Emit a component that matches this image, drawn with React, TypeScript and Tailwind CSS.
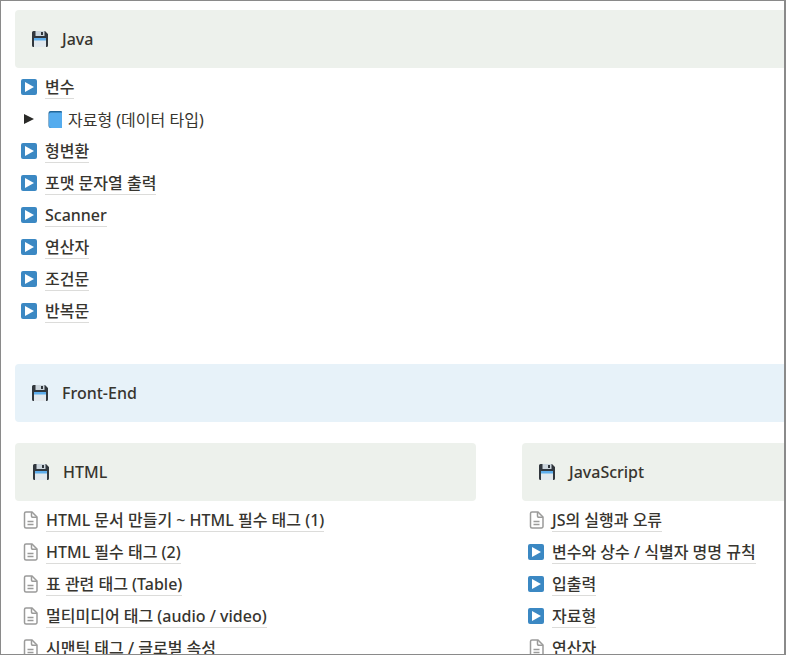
function SaveIcon() {
  return (
    <svg width="16" height="16" viewBox="0 0 16 16" className="shrink-0">
      <path d="M1.5 0H13L16 3V14.5A1.5 1.5 0 0 1 14.5 16H1.5A1.5 1.5 0 0 1 0 14.5V1.5A1.5 1.5 0 0 1 1.5 0z" fill="#31373d" />
      <rect x="3.5" y="0" width="9" height="5" fill="#ccd6dd" />
      <rect x="9" y="1" width="2" height="3" fill="#31373d" />
      <rect x="2" y="7" width="12" height="9" fill="#e1e8ed" />
      <rect x="2" y="7" width="12" height="2.5" fill="#5dadec" />
    </svg>
  );
}

function VideoIcon() {
  return (
    <svg width="16" height="16" viewBox="0 0 16 16" className="shrink-0">
      <rect width="16" height="16" rx="2" fill="#3b88c3" />
      <path d="M4 3v10l9-5z" fill="#fff" />
    </svg>
  );
}

function PageIcon() {
  return (
    <svg width="15" height="18" viewBox="0 0 15 18" fill="none" stroke="#9b9b9a" strokeWidth="1.5" className="shrink-0">
      <path d="M3 1h6L14 6v9.5a1.5 1.5 0 0 1-1.5 1.5H3a1.5 1.5 0 0 1-1.5-1.5v-13A1.5 1.5 0 0 1 3 1z" />
      <path d="M8.5 1v4a1.2 1.2 0 0 0 1.2 1.2H14" />
      <path d="M4.5 10.5h6M4.5 13.5h6" />
    </svg>
  );
}

function BookIcon() {
  return (
    <svg width="15" height="17" viewBox="0 0 15 17" className="shrink-0">
      <path d="M2.5 0H13a1 1 0 0 1 1 1v15a1 1 0 0 1-1 1H3a2.5 2.5 0 0 1-2.5-2.5V2A2 2 0 0 1 2.5 0z" fill="#226699" />
      <path d="M3.5 1.5H14V17H3.5A2.5 2.5 0 0 1 1 14.5V3.5a2 2 0 0 1 2.5-2z" fill="#55acee" />
    </svg>
  );
}

function Callout({ title, tone, className }: { title: string; tone: string; className?: string }) {
  return (
    <div className={`flex h-[58px] items-center gap-[14px] rounded-l-[4px] text-base font-medium text-[#37352f] ${tone} ${className ?? ''}`}>
      <SaveIcon />
      <span>{title}</span>
    </div>
  );
}

function LinkRow({ label, icon }: { label: string; icon: 'video' | 'page' }) {
  return (
    <div className="flex h-8 items-center gap-2 pl-[6px] text-base font-medium leading-5 text-[#37352f]">
      <span className="flex w-4 justify-center">{icon === 'video' ? <VideoIcon /> : <PageIcon />}</span>
      <span className="mt-[1px] border-b border-[#dcdcda] pb-[1px]">{label}</span>
    </div>
  );
}

const javaTop = ['변수'];
const javaRest = ['형변환', '포맷 문자열 출력', 'Scanner', '연산자', '조건문', '반복문'];

const htmlRows = [
  'HTML 문서 만들기 ~ HTML 필수 태그 (1)',
  'HTML 필수 태그 (2)',
  '표 관련 태그 (Table)',
  '멀티미디어 태그 (audio / video)',
  '시맨틱 태그 / 글로벌 속성',
];

const jsRows: { label: string; icon: 'video' | 'page' }[] = [
  { label: 'JS의 실행과 오류', icon: 'page' },
  { label: '변수와 상수 / 식별자 명명 규칙', icon: 'video' },
  { label: '입출력', icon: 'video' },
  { label: '자료형', icon: 'video' },
  { label: '연산자', icon: 'page' },
];

export default function App() {
  return (
    <div
      className="h-[655px] w-[786px] overflow-hidden border border-r-2 border-[#8a8a8a] bg-white"
      style={{ fontFamily: '"Noto Sans", "Noto Sans CJK KR", sans-serif' }}
    >
      <div className="pl-[14px] pt-[9px]">
        <Callout title="Java" tone="bg-[#edf1ec] pl-[17px]" />
        <div className="mt-[3px]">
          {javaTop.map((label) => (
            <LinkRow key={label} label={label} icon="video" />
          ))}
          <div className="flex h-8 items-center pl-[9px] text-base text-[#37352f]">
            <svg width="10" height="10" viewBox="0 0 10 10" className="shrink-0">
              <path d="M0 0v10l10-5z" fill="#2a2a28" />
            </svg>
            <span className="ml-[14px]">
              <BookIcon />
            </span>
            <span className="ml-[5px] mt-[1px]">자료형 (데이터 타입)</span>
          </div>
          {javaRest.map((label) => (
            <LinkRow key={label} label={label} icon="video" />
          ))}
        </div>
        <Callout title="Front-End" tone="bg-[#e7f2f9] pl-[17px]" className="mt-[37px]" />
        <div className="mt-[21px] flex items-start">
          <div className="w-[461px] shrink-0">
            <Callout title="HTML" tone="rounded-r-[4px] bg-[#edf1ec] pl-[18px]" />
            <div className="mt-[3px] pl-[1px]">
              {htmlRows.map((label) => (
                <LinkRow key={label} label={label} icon="page" />
              ))}
            </div>
          </div>
          <div className="ml-[46px] flex-1">
            <Callout title="JavaScript" tone="bg-[#edf1ec] pl-[17px]" />
            <div className="mt-[3px]">
              {jsRows.map((row) => (
                <LinkRow key={row.label} label={row.label} icon={row.icon} />
              ))}
            </div>
          </div>
        </div>
      </div>
    </div>
  );
}
